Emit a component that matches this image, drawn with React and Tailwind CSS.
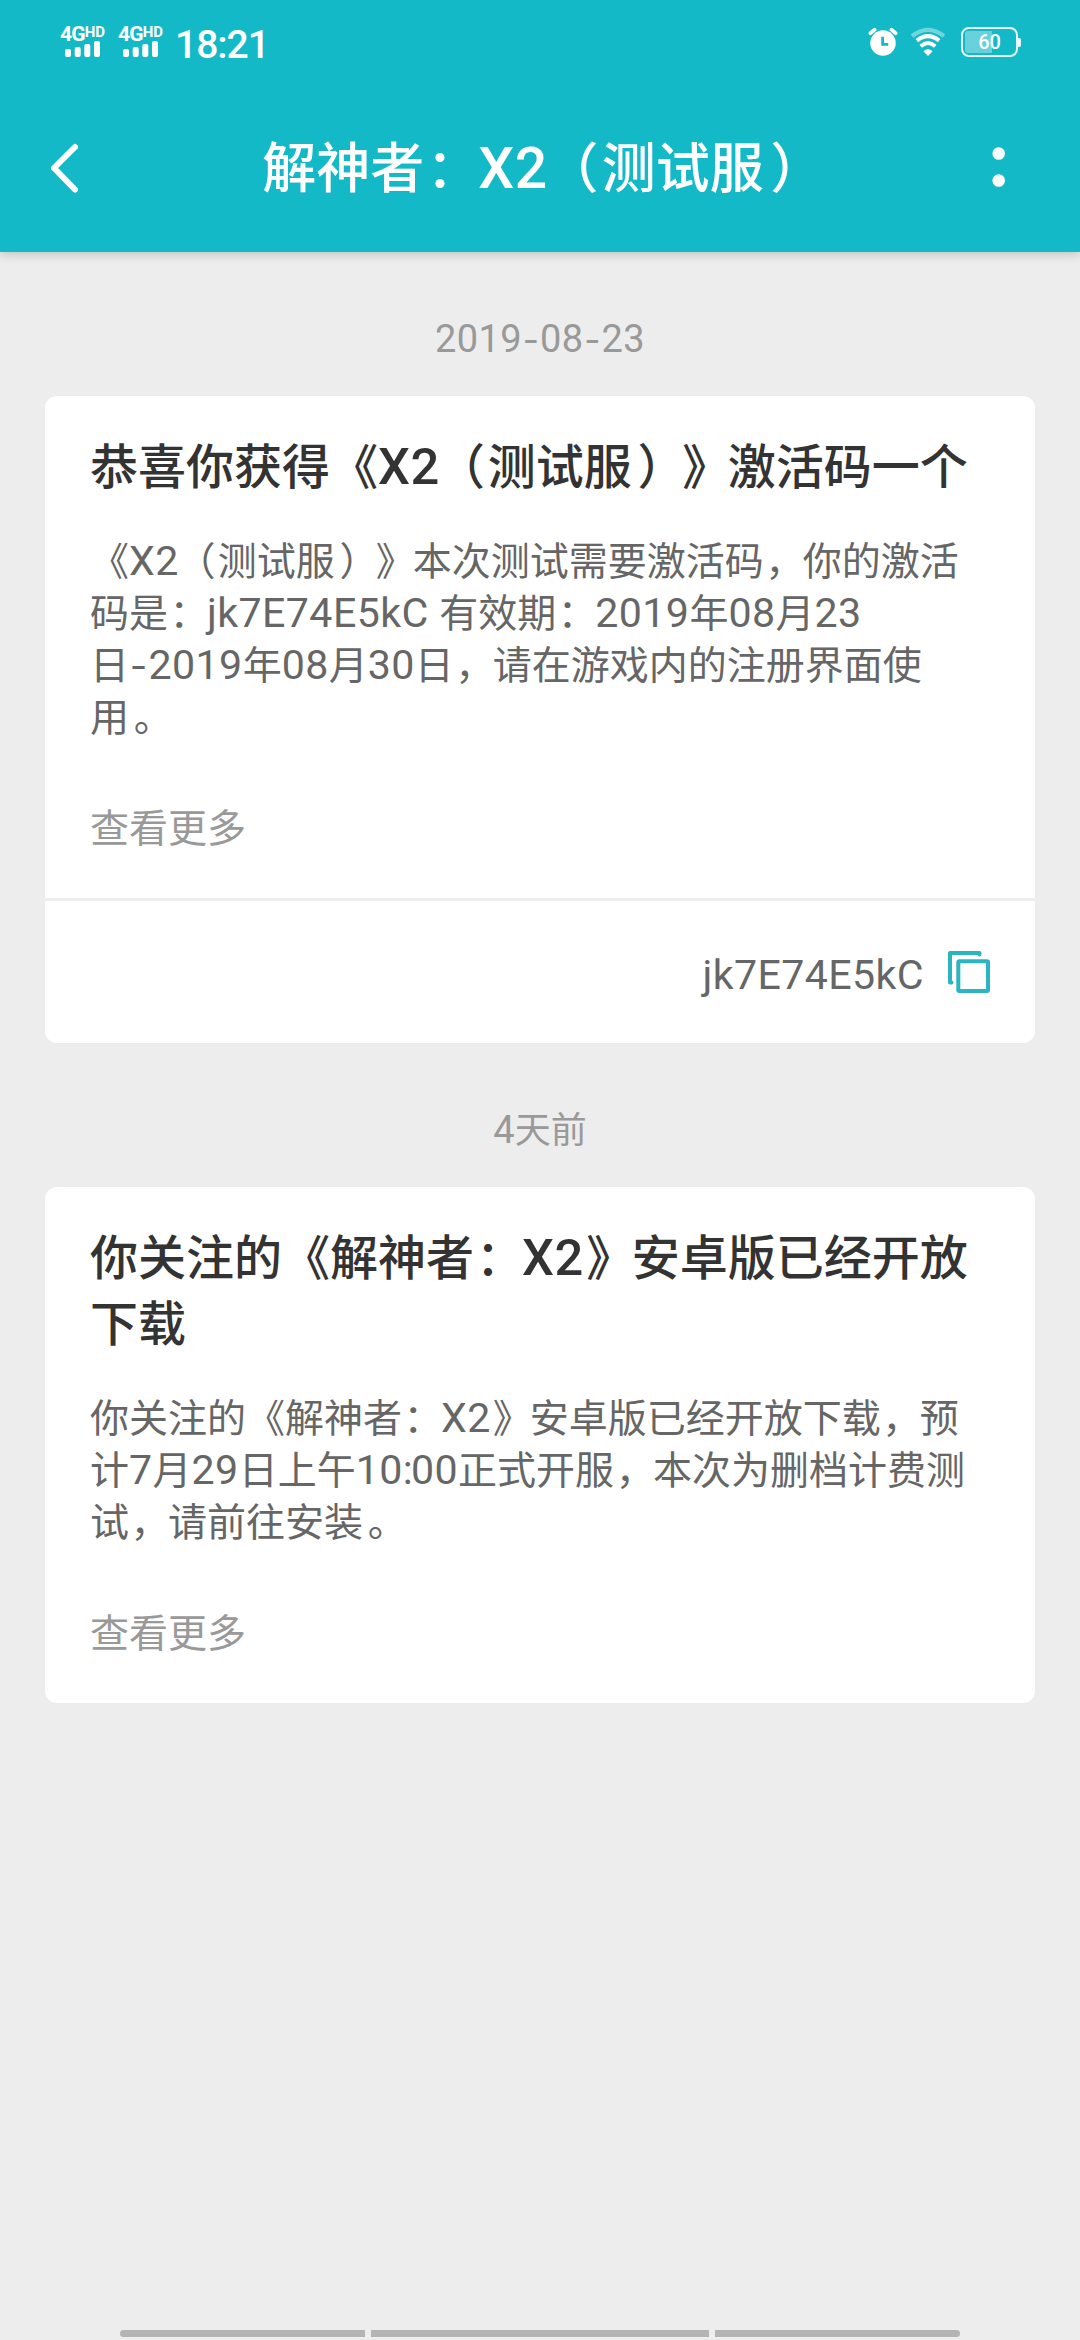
import React from "react";

const LATIN = "font-[Roboto] text-[1.055em] leading-[0] tracking-[0.01em]";

const LATIN_MARKS = {
  "-": "mx-[0.02em] font-[Inter] text-[0.93em]",
  ":": "tracking-[-0.04em]",
};

// Punctuation is shifted inside its full-width box.
const PUNCTUATION = {
  "（": "-ml-[0.06em] mr-[0.06em]",
  "）": "ml-[0.12em] tracking-[-0.12em]",
  "》": "ml-[0.05em] tracking-[-0.05em]",
  "。": "ml-[0.12em] tracking-[-0.12em]",
  "：": "ml-[0.04em] tracking-[-0.04em]",
  "，": "ml-[0.04em] tracking-[-0.04em]",
};

// Splits mixed text so Latin runs and punctuation get their own metrics.
function Mixed({ children }) {
  const parts = String(children).split(/([0-9A-Za-z:\- ]+|[（）》，：。])/);
  return parts.map((part, i) => {
    if (!part) return null;
    if (/^[0-9A-Za-z:\- ]+$/.test(part)) {
      return (
        <span key={i} className={LATIN}>
          {part.split(/([-:])/).map((p, j) =>
            LATIN_MARKS[p] ? (
              <span key={j} className={LATIN_MARKS[p]}>{p}</span>
            ) : (
              p
            )
          )}
        </span>
      );
    }
    if (PUNCTUATION[part]) return <span key={i} className={PUNCTUATION[part]}>{part}</span>;
    return <React.Fragment key={i}>{part}</React.Fragment>;
  });
}

function Signal() {
  return (
    <div className="flex h-[32px] w-[48px] flex-col">
      <div className="flex h-[14px] items-start font-[Roboto] font-bold text-white">
        <span className="text-[21px] leading-[15px] tracking-[-0.8px]">4G</span>
        <span className="text-[15px] leading-[10px]">HD</span>
      </div>
      <svg className="ml-[5px]" width="36" height="16" viewBox="0 0 36 16" fill="#fff">
        <rect x="0" y="8" width="6" height="8" rx="2" />
        <rect x="9.7" y="6" width="6" height="10" rx="2" />
        <rect x="19.3" y="3" width="6" height="13" rx="2" />
        <rect x="29" y="0" width="6" height="16" rx="2" />
      </svg>
    </div>
  );
}

function StatusBar() {
  return (
    <div className="flex h-[84px] items-start justify-between pt-[27px] pr-[59px] pl-[60px]">
      <div className="flex items-start">
        <Signal />
        <div className="w-[10px]" />
        <Signal />
        <span className="ml-[9px] font-[Roboto] text-[39px] leading-[36px] font-medium tracking-[-1px] text-white">
          18:21
        </span>
      </div>
      <div className="flex items-start">
        <svg width="30" height="30" viewBox="0 0 32 32" fill="none">
          <circle cx="16" cy="17" r="13.6" fill="#fff" />
          <path d="M2.6 6.6 7 2.8M29.4 6.6 25 2.8" stroke="#fff" strokeWidth="4" strokeLinecap="round" />
          <path d="M15.6 10.5v8h6" stroke="#14b9c8" strokeWidth="3" />
        </svg>
        <svg className="ml-[12px]" width="36" height="30" viewBox="0 0 37 31" fill="none" strokeWidth="4.2">
          <path d="M2 9.5Q18.500-3.500 35 9.500" stroke="#fff" opacity="0.4" />
          <path d="M7 14Q18.500 5 30 14" stroke="#fff" />
          <path d="M11 19.800Q18.500 13.500 26 19.800" stroke="#fff" strokeWidth="4" />
          <path d="M13.800 25Q18.500 21 23.200 25L18.500 30Z" fill="#fff" />
        </svg>
        <div className="ml-[15px] flex items-center">
          <div className="flex h-[30px] w-[57px] items-center rounded-[8px] border-[2.500px] border-white/90 p-[2px]">
            <div className="flex h-full w-full items-center justify-center rounded-[3px] bg-linear-to-r from-white/35 from-56% to-transparent to-56% font-[Roboto] text-[20px] leading-none font-medium text-white">
              60
            </div>
          </div>
          <div className="h-[9px] w-[3px] rounded-r-[2px] bg-white/90" />
        </div>
      </div>
    </div>
  );
}

function Header() {
  return (
    <header className="z-10 h-[252px] bg-[#14b9c8] shadow-[0_2px_10px_rgba(0,0,0,0.2)]">
      <StatusBar />
      <div className="flex h-[168px] items-center justify-between pr-[70px] pl-[46px]">
        <svg width="40" height="60" viewBox="0 0 40 60" fill="none">
          <path d="M29 9 8 30l21 21.500" stroke="#fff" strokeWidth="6" strokeLinecap="round" strokeLinejoin="round" />
        </svg>
        <h1 className="ml-[6px] pb-[7px] text-[54px] leading-[80px] font-medium whitespace-nowrap text-white">
          <Mixed>解神者：X2（测试服）</Mixed>
        </h1>
        <svg width="22" height="60" viewBox="0 0 22 60" fill="#fff">
          <circle cx="10.700" cy="15.500" r="6.300" />
          <circle cx="10.700" cy="42.500" r="6.300" />
        </svg>
      </div>
    </header>
  );
}

function Lines({ lines }) {
  return lines.map((line) => (
    <span key={line} className="block whitespace-nowrap">
      <Mixed>{line}</Mixed>
    </span>
  ));
}

function DateLabel({ children }) {
  return (
    <div className="pt-[60px] pb-[36px] text-center text-[36px] leading-[48px] text-[#999]">
      <Mixed>{children}</Mixed>
    </div>
  );
}

function MessageCard({ title, body, code }) {
  return (
    <article className="mx-[45px] rounded-[12px] bg-white">
      <div className="px-[45px] pt-[34px] pb-[47px]">
        <h2 className="text-[48px] leading-[66px] font-medium text-[#333]">
          <Lines lines={title} />
        </h2>
        <p className="mt-[36px] text-[39px] leading-[52px] text-[#666]">
          <Lines lines={body} />
        </p>
        <a className="mt-[59px] block text-[39px] leading-[52px] text-[#999]">查看更多</a>
      </div>
      {code && (
        <div className="flex h-[145px] items-center justify-end border-t-[3px] border-[#ededed] pr-[45px]">
          <span className="mr-[24px] text-[39px] leading-[52px] text-[#666]">
            <Mixed>{code}</Mixed>
          </span>
          <svg width="42" height="42" viewBox="0 0 42 42" fill="none" stroke="#2bb5c2" strokeWidth="4" strokeLinecap="round" strokeLinejoin="round">
            <rect x="10.300" y="10.300" width="29.700" height="29.700" rx="1" />
            <path d="M31.500 3.500V2H2v29.500h1.500" />
          </svg>
        </div>
      )}
    </article>
  );
}

function GestureBar() {
  return (
    <div className="mt-auto flex h-[10px] gap-[6px] px-[120px]">
      <div className="h-[7px] w-[245px] rounded-l-full bg-[#b4b4b4]" />
      <div className="h-[7px] w-[338px] bg-[#b4b4b4]" />
      <div className="h-[7px] w-[245px] rounded-r-full bg-[#b4b4b4]" />
    </div>
  );
}

export default function App() {
  return (
    <div
      lang="zh-CN"
      className="flex h-[2340px] w-[1080px] flex-col overflow-hidden bg-[#ededed] font-['Noto_Sans_CJK_SC',sans-serif] [text-spacing-trim:space-all]"
    >
      <Header />
      <DateLabel>2019-08-23</DateLabel>
      <MessageCard
        title={["恭喜你获得《X2（测试服）》激活码一个"]}
        body={[
          "《X2（测试服）》本次测试需要激活码，你的激活",
          "码是：jk7E74E5kC 有效期：2019年08月23",
          "日-2019年08月30日，请在游戏内的注册界面使",
          "用。",
        ]}
        code="jk7E74E5kC"
      />
      <DateLabel>4天前</DateLabel>
      <MessageCard
        title={["你关注的《解神者：X2》安卓版已经开放", "下载"]}
        body={[
          "你关注的《解神者：X2》安卓版已经开放下载，预",
          "计7月29日上午10:00正式开服，本次为删档计费测",
          "试，请前往安装。",
        ]}
      />
      <GestureBar />
    </div>
  );
}
